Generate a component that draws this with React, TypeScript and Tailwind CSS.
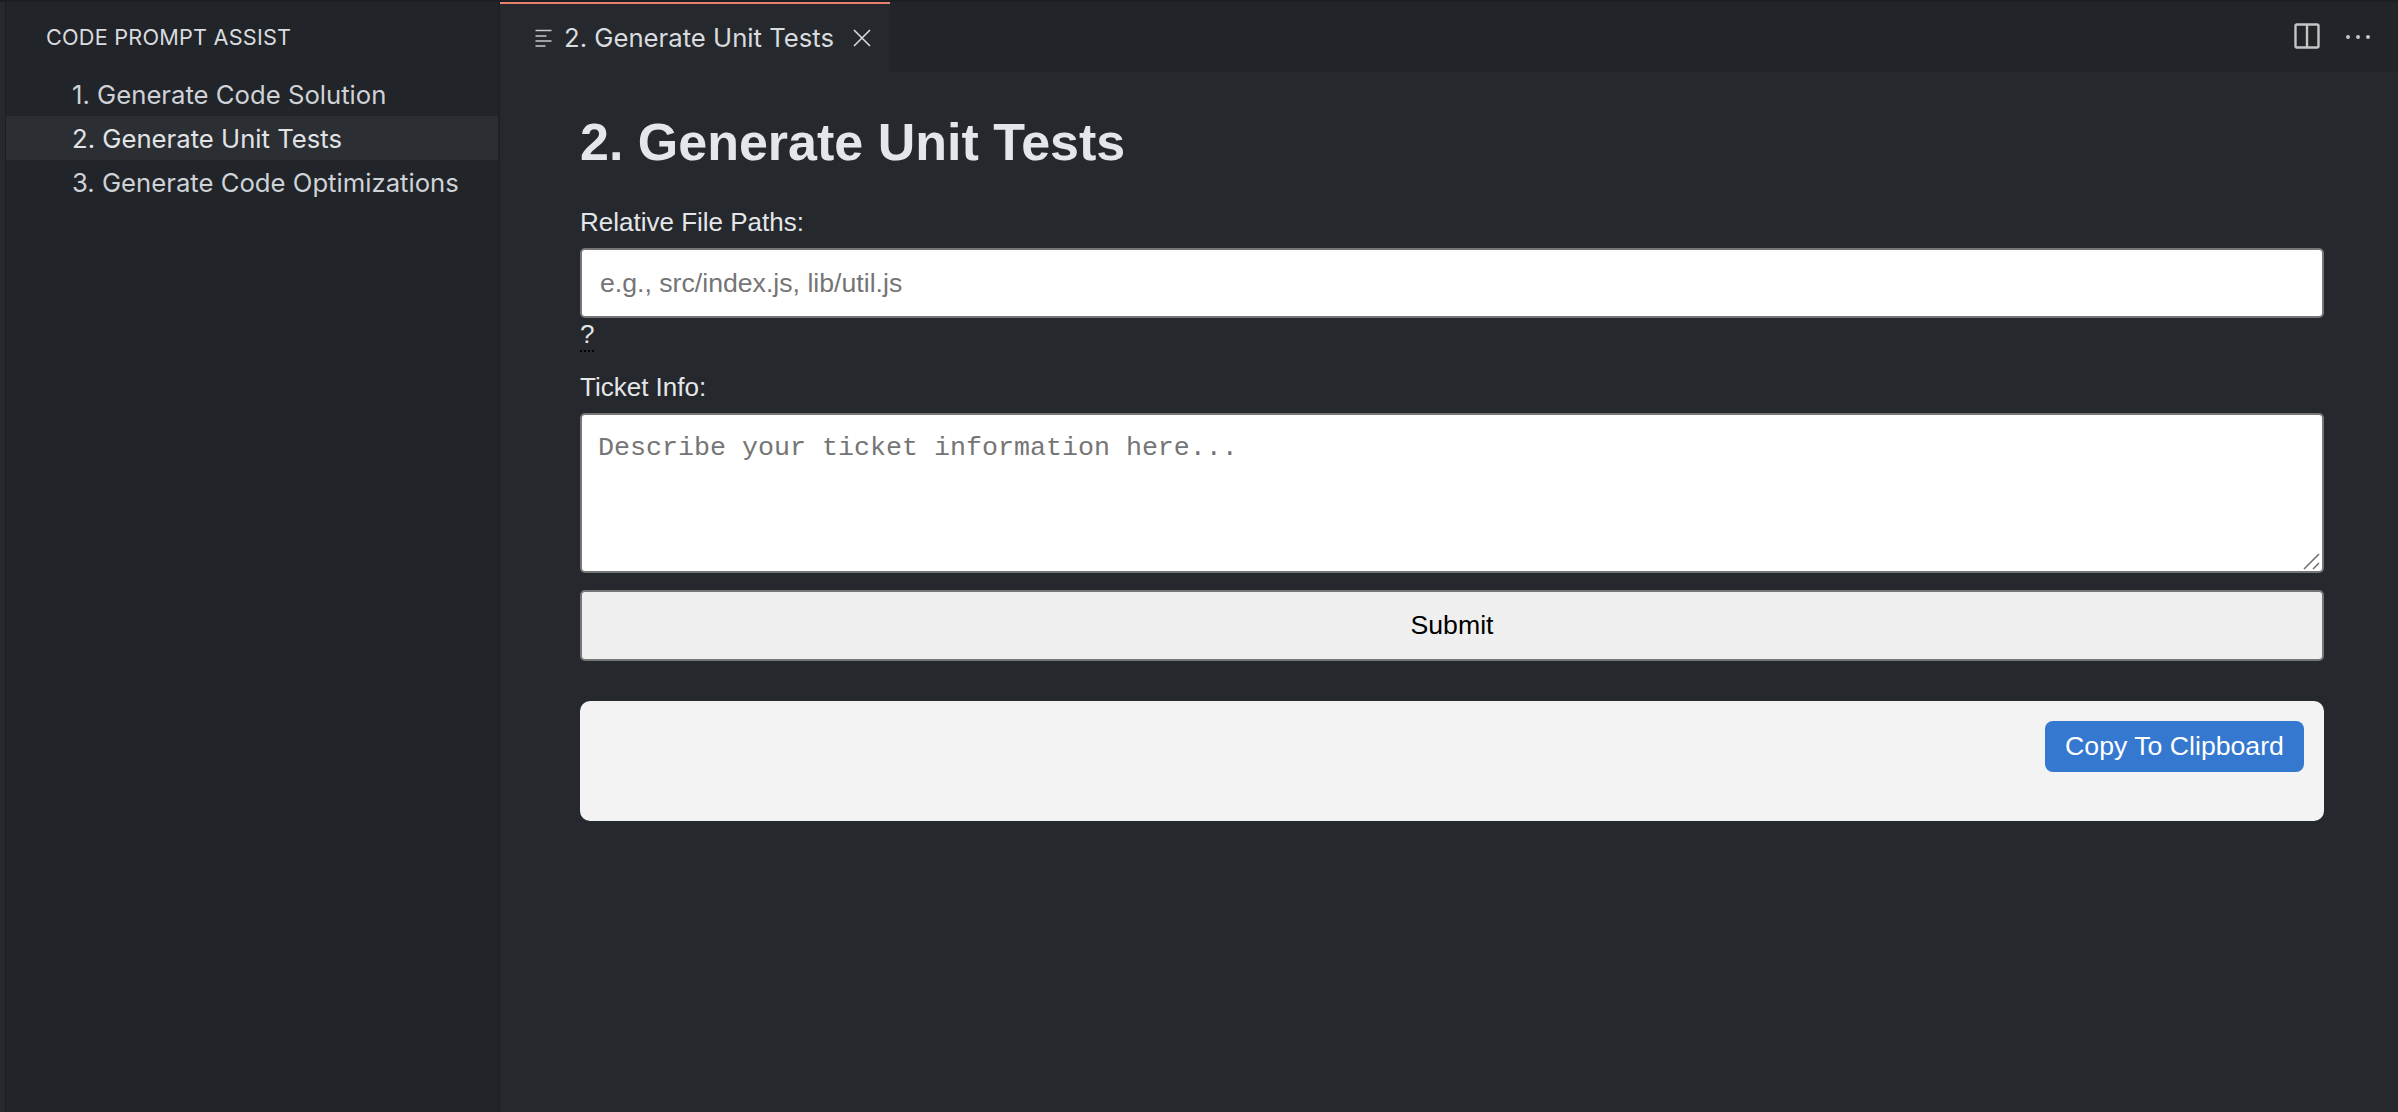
export default function App() {
  const items = ["1. Generate Code Solution", "2. Generate Unit Tests", "3. Generate Code Optimizations"];
  return (
    <div className="flex flex-col h-[1112px] w-[2398px] overflow-hidden bg-[#1d2024] font-['Inter',sans-serif]">
      <div className="h-[2px] shrink-0 bg-[#1b1e22]" />
      <div className="flex flex-1 min-h-0">
        <div className="w-[6px] shrink-0 bg-[#25282c] border-r border-[#1b1e22]" />
        <aside className="w-[494px] shrink-0 bg-[#212429] border-r-2 border-[#1d2024]">
          <div className="h-[70px] pl-[40px] flex items-center text-[21.7px] text-[#d9dbdf] tracking-[0.2px]">CODE PROMPT ASSIST</div>
          <ul className="text-[25.7px] leading-[46px]">
            {items.map((t, i) => (
              <li key={t} className={i === 1 ? "pl-[66px] h-[44px] bg-[#2b2f33] text-[#e1e3e6]" : "pl-[66px] h-[44px] text-[#cfd2d6]"}>{t}</li>
            ))}
          </ul>
        </aside>
        <main className="flex-1 min-w-0 flex flex-col bg-[#25282c]">
          <div className="h-[70px] shrink-0 flex bg-[#212429]">
            <div className="w-[390px] flex items-center bg-[#25282c] border-t-2 border-[#e8826c]">
              <svg className="ml-[35px] mr-[11px] shrink-0" width="18" height="18" viewBox="0 0 18 18" fill="none" stroke="#c5c8cc" strokeWidth="1.6">
                <path d="M0.5 1.5h16M0.5 7h11M0.5 12h16M0.5 17h10" />
              </svg>
              <span className="text-[25.7px] text-[#d9dbdf] whitespace-nowrap">2. Generate Unit Tests</span>
              <svg className="ml-[19px] shrink-0" width="18" height="18" viewBox="0 0 18 18" fill="none" stroke="#d9dbdf" strokeWidth="1.6">
                <path d="M1 1l16 16M17 1L1 17" />
              </svg>
            </div>
            <div className="flex-1 flex items-center justify-end pr-[28px]">
              <svg className="mt-[-3px]" width="26" height="26" viewBox="0 0 26 26" fill="none" stroke="#c5c5c5" strokeWidth="2.4">
                <rect x="1.5" y="1.5" width="23" height="23" rx="1.5" />
                <path d="M13 1.5v23" />
              </svg>
              <div className="ml-[26px] flex gap-[6px]">
                <span className="w-[4px] h-[4px] rounded-full bg-[#c5c5c5]" />
                <span className="w-[4px] h-[4px] rounded-full bg-[#c5c5c5]" />
                <span className="w-[4px] h-[4px] rounded-full bg-[#c5c5c5]" />
              </div>
            </div>
          </div>
          <div className="flex-1 pl-[80px] pr-[74px] font-['Liberation_Sans',Arial,sans-serif] text-[26px] text-[#e4e6e9]">
            <h1 className="mt-[40px] text-[52px] leading-[60px] font-bold">2. Generate Unit Tests</h1>
            <label className="block mt-[35px] leading-[30px] text-[26px]">Relative File Paths:</label>
            <input
              placeholder="e.g., src/index.js, lib/util.js"
              className="block mt-[11px] w-full h-[70px] px-[18px] bg-white border-2 border-[#767676] rounded-[5px] text-[26.67px] outline-none placeholder:text-[#757575]"
            />
            <div className="h-[33px] mt-[1px] flex">
              <span className="block h-[33px] leading-[31px] border-b-2 border-dotted border-black">?</span>
            </div>
            <label className="block mt-[20px] leading-[30px] text-[26px]">Ticket Info:</label>
            <div className="relative mt-[11px]">
              <textarea
                placeholder="Describe your ticket information here..."
                className="block w-full h-[160px] px-[16px] pt-[18px] bg-white border-2 border-[#767676] rounded-[5px] font-['Liberation_Mono',monospace] text-[26.67px] leading-[30px] outline-none placeholder:text-[#757575] resize-none"
              />
              <svg className="absolute right-[3px] bottom-[3px]" width="18" height="18" viewBox="0 0 18 18" fill="none" stroke="#6b6b6b" strokeWidth="1.5">
                <path d="M1 17L16 2M10 17l6-6" />
              </svg>
            </div>
            <button className="block mt-[17px] w-full h-[71px] pb-[2px] bg-[#efefef] border-2 border-[#767676] rounded-[5px] text-[26.67px] text-black">Submit</button>
            <div className="mt-[40px] h-[120px] w-full bg-[#f3f3f3] rounded-[10px] flex justify-end items-start pt-[20px] pr-[20px]">
              <button className="h-[51px] w-[259px] pb-[2px] bg-[#3478d0] rounded-[8px] text-[26.67px] text-white">Copy To Clipboard</button>
            </div>
          </div>
        </main>
      </div>
    </div>
  );
}
